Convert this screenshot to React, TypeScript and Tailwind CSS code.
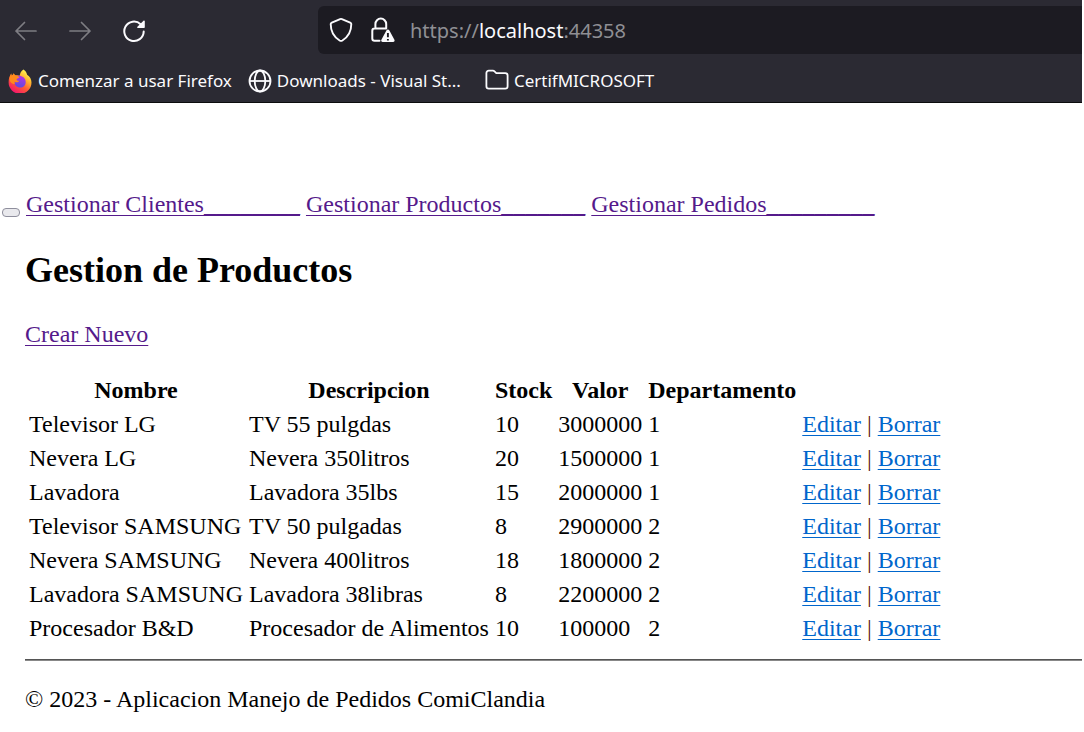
const navLinks = [
  "Gestionar Clientes________",
  "Gestionar Productos_______",
  "Gestionar Pedidos_________",
];

const products = [
  ["Televisor LG", "TV 55 pulgdas", "10", "3000000", "1"],
  ["Nevera LG", "Nevera 350litros", "20", "1500000", "1"],
  ["Lavadora", "Lavadora 35lbs", "15", "2000000", "1"],
  ["Televisor SAMSUNG", "TV 50 pulgadas", "8", "2900000", "2"],
  ["Nevera SAMSUNG", "Nevera 400litros", "18", "1800000", "2"],
  ["Lavadora SAMSUNG", "Lavadora 38libras", "8", "2200000", "2"],
  ["Procesador B&D", "Procesador de Alimentos", "10", "100000", "2"],
];

const columns = ["Nombre", "Descripcion", "Stock", "Valor", "Departamento"];

const visited = "text-[#551a8b] underline decoration-1 underline-offset-[3px] [text-decoration-skip-ink:none]";
const link = "text-[#0066cc] underline decoration-1 underline-offset-[3px]";

function BackIcon() {
  return (
    <svg width="24" height="24" viewBox="0 0 24 24" fill="none" stroke="#7e7d83" strokeWidth="1.7" strokeLinecap="round" strokeLinejoin="round">
      <path d="M22 12H2M10.500 3.500 2 12l8.500 8.500" />
    </svg>
  );
}

function ForwardIcon() {
  return (
    <svg width="24" height="24" viewBox="0 0 24 24" fill="none" stroke="#7e7d83" strokeWidth="1.700" strokeLinecap="round" strokeLinejoin="round">
      <path d="M2 12h20M13.500 3.500 22 12l-8.500 8.500" />
    </svg>
  );
}

function ReloadIcon() {
  return (
    <svg width="24" height="24" viewBox="0 0 24 24" fill="none">
      <path d="M18.600 5.200A9.700 9.700 0 1 0 21.700 12.600" stroke="#fbfbfe" strokeWidth="2" strokeLinecap="round" />
      <path d="M22.800 2.200v6.100a.8.8 0 0 1-.8.800h-6.100c-.7 0-1-.8-.5-1.300l6.100-6.100c.5-.5 1.300-.2 1.300.5z" fill="#fbfbfe" />
    </svg>
  );
}

function ShieldIcon() {
  return (
    <svg width="24" height="26" viewBox="0 0 24 26" fill="none" stroke="#fbfbfe" strokeWidth="1.900" strokeLinejoin="round">
      <path d="M12 1.900c.3 0 .6.100.9.200l8.300 3.500c.7.300 1.100.8 1.100 1.500 0 7.400-2.100 12.300-8.900 16.400-.9.500-1.900.5-2.800 0C3.800 19.400 1.700 14.500 1.700 7.100c0-.7.400-1.200 1.100-1.500l8.300-3.500c.3-.1.600-.2.900-.2z" />
    </svg>
  );
}

function LockWarningIcon() {
  return (
    <svg width="24" height="26" viewBox="0 0 24 26" fill="none">
      <path d="M4.400 11.500V7a5.400 5.400 0 0 1 10.800 0v4.500M8.500 23.800H3.600c-1.400 0-2.300-.9-2.300-2.300v-7.600c0-1.400.9-2.300 2.300-2.300h11.500" stroke="#fbfbfe" strokeWidth="2" strokeLinecap="round" />
      <path d="M15.400 13.500c.7-1.300 2.300-1.300 3 0l5 9.200c.6 1.100-.1 2.300-1.300 2.300H11.700c-1.200 0-1.900-1.200-1.300-2.300z" fill="#fbfbfe" />
      <path d="M16.900 16v4.200M16.900 22v1.400" stroke="#1c1b22" strokeWidth="1.900" />
    </svg>
  );
}

function FirefoxIcon() {
  return (
    <svg width="24" height="24" viewBox="0 0 24 24">
      <defs>
        <linearGradient id="fx-body" x1="0.800" y1="0.100" x2="0.250" y2="0.950">
          <stop offset="0" stopColor="#fff44f" />
          <stop offset="0.300" stopColor="#ffb02e" />
          <stop offset="0.600" stopColor="#ff5a36" />
          <stop offset="1" stopColor="#f5156c" />
        </linearGradient>
        <linearGradient id="fx-globe" x1="0.700" y1="0" x2="0.400" y2="1">
          <stop offset="0" stopColor="#b833e1" />
          <stop offset="1" stopColor="#5b4be0" />
        </linearGradient>
      </defs>
      <path d="M15.500.500c2.300 1.700 3.300 3.500 3.600 5.200 2.800 1.600 4.400 4.600 4.400 7.700A11.400 11.400 0 0 1 .6 13.300C.6 10 1.500 7.200 3.300 4.600c0 .9.100 1.600.4 2.200.8-.6 1.500-1.100 2.100-2.500.3 1.300 1 1.800 1.900 2.100 1.500-.4 2.900-.1 4 .4C12 4.100 13 2 15.500.5z" fill="url(#fx-body)" />
      <path d="M7 10.300c1.800.2 2.300-1 4.300-1.700C10.600 7.700 9.700 7.300 8.800 7c3.900-1.200 8.800 1.100 8.900 5.900.1 3.200-2.400 5.700-5.500 5.700-3.400 0-5.800-2.500-5.800-5.500 0-1.100.2-2 .6-2.800z" fill="url(#fx-globe)" />
      <path d="M3.300 4.600c0 .9.100 1.600.4 2.200.8-.6 1.500-1.100 2.100-2.500.3 1.300 1 1.800 1.900 2.100 1.300.3 2.600 1 3.600 2.200-1.500.1-2.700 1-2.700 2 0 .9 1 1.300 2.600 1.200-1 1.700-3 2-4.600.9-.2.800-.1 1.600.2 2.400C4 15 1.600 13 1.500 10c.1-2 .8-3.800 1.800-5.400z" fill="#ff8a1d" />
    </svg>
  );
}

function GlobeIcon() {
  return (
    <svg width="24" height="24" viewBox="0 0 24 24" fill="none" stroke="#fbfbfe" strokeWidth="1.800">
      <circle cx="12" cy="12" r="10.500" />
      <ellipse cx="12" cy="12" rx="5.300" ry="10.500" />
      <path d="M1.500 12h21" />
    </svg>
  );
}

function FolderIcon() {
  return (
    <svg width="24" height="24" viewBox="0 0 24 24" fill="none" stroke="#fbfbfe" strokeWidth="1.800" strokeLinejoin="round">
      <path d="M1.400 4.100c0-1.400 1-2.400 2.400-2.400h4.100c.6 0 1.200.2 1.600.6l1.800 1.800h8.900c1.400 0 2.400 1 2.400 2.400v10.800c0 1.400-1 2.400-2.400 2.400H3.800c-1.400 0-2.400-1-2.400-2.400z" />
    </svg>
  );
}

function BrowserBar() {
  return (
    <header className="border-b border-[#0c0c0d] bg-[#2b2a33] font-['Noto_Sans',sans-serif]">
      <div className="flex items-center pt-[6px]">
        <div className="flex w-[318px] shrink-0 gap-[30px] pl-[14px] pt-[2px]">
          <button type="button" aria-label="Atrás"><BackIcon /></button>
          <button type="button" aria-label="Adelante"><ForwardIcon /></button>
          <button type="button" aria-label="Recargar"><ReloadIcon /></button>
        </div>
        <div className="flex h-12 flex-1 items-center rounded-l-md bg-[#1c1b22] pl-[11px]">
          <ShieldIcon />
          <span className="ml-[18px]"><LockWarningIcon /></span>
          <a href="https://localhost:44358" className="ml-[15px] pt-[2px] text-xl text-[#8f8f94]">
            https://<span className="text-[#fbfbfe]">localhost</span>:44358
          </a>
        </div>
      </div>
      <nav className="flex h-12 items-center pt-[6px] pl-2 text-[17px] text-[#fbfbfe]">
        <a href="#firefox" className="flex items-center gap-[6px]"><FirefoxIcon />Comenzar a usar Firefox</a>
        <a href="#downloads" className="ml-4 flex items-center gap-[5px]"><GlobeIcon />Downloads - Visual St...</a>
        <a href="#certif" className="ml-6 flex items-center gap-[5px]"><FolderIcon />CertifMICROSOFT</a>
      </nav>
    </header>
  );
}

export default function App() {
  return (
    <div className="min-h-screen bg-white pr-[2px] font-['Liberation_Serif',serif] text-2xl/[28px] text-black">
      <BrowserBar />
      <nav className="flex items-baseline gap-[6px] pl-[2px] pt-[87px]">
        <button type="button" aria-label="Menú" className="mb-px h-[9px] w-[18px] self-end rounded-[4px] border border-[#8f8f9d] bg-[#e9e9ed]" />
        {navLinks.map((text) => (
          <a key={text} href="#" className={visited}>{text}</a>
        ))}
      </nav>
      <main className="pl-[25px]">
        <h2 className="mt-[31px] text-4xl/[42px] font-bold">Gestion de Productos</h2>
        <p className="mt-[29px]"><a href="#nuevo" className={visited}>Crear Nuevo</a></p>
        <table className="mt-6 border-separate border-spacing-[2px]">
          <thead>
            <tr>
              {columns.map((c) => (
                <th key={c} className="p-[2px] text-center font-bold">{c}</th>
              ))}
              <th aria-label="Acciones" className="p-[2px]" />
            </tr>
          </thead>
          <tbody>
            {products.map((row) => (
              <tr key={row[0]}>
                {row.map((cell, i) => (
                  <td key={i} className="whitespace-nowrap p-[2px]">{cell}</td>
                ))}
                <td className="whitespace-nowrap p-[2px] text-[#5c1a14]">
                  <a href="#editar" className={link}>Editar</a> | <a href="#borrar" className={link}>Borrar</a>
                </td>
              </tr>
            ))}
          </tbody>
        </table>
        <hr className="mt-[13px] h-[2px] border-t border-b border-t-[#555555] border-b-[#888888]" />
        <footer className="mt-6">© 2023 - Aplicacion Manejo de Pedidos ComiClandia</footer>
      </main>
    </div>
  );
}
